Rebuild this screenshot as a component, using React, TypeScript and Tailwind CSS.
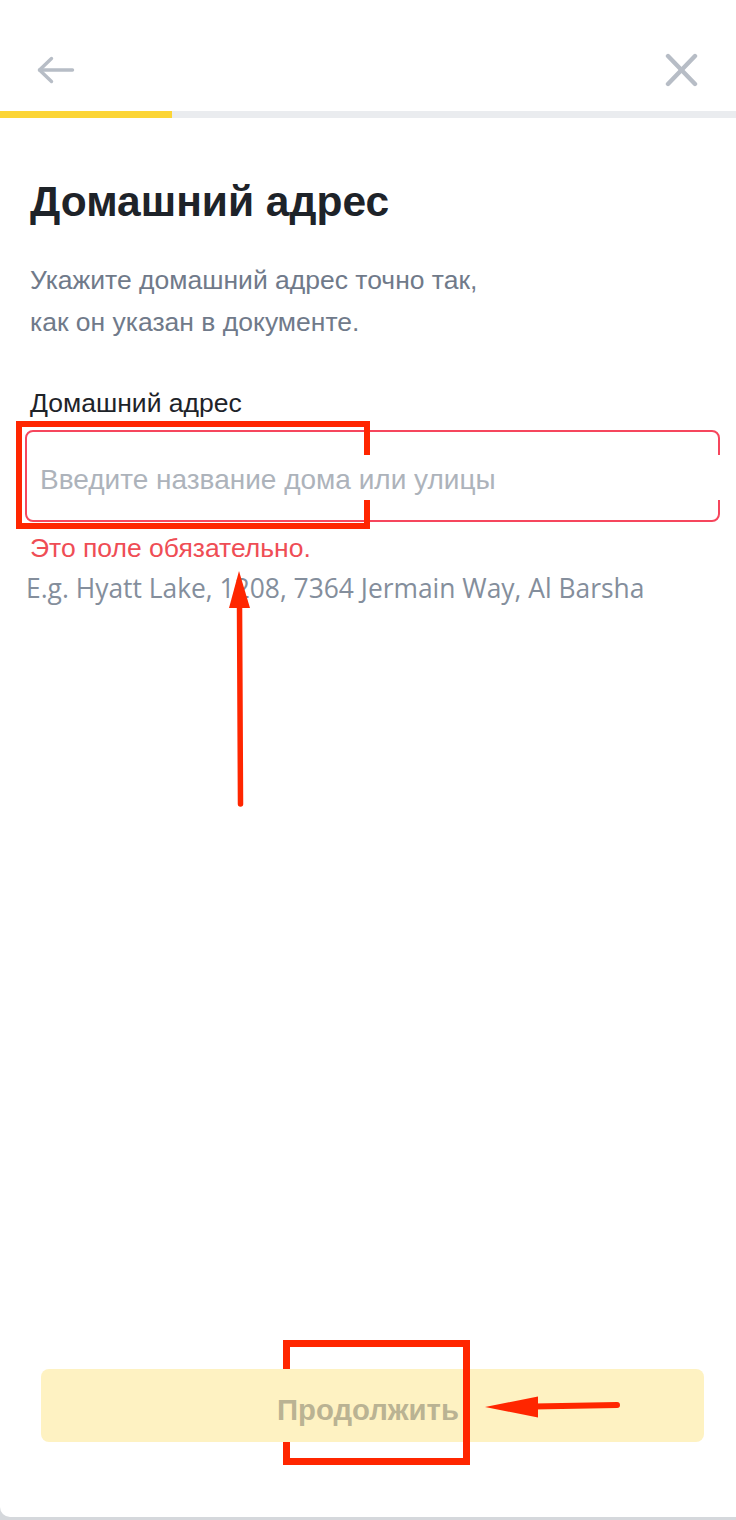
import React from "react";

const sans = "font-['Liberation_Sans','Noto_Sans',Arial,sans-serif]";

function BackIcon() {
  return (
    <svg width="40" height="30" viewBox="0 0 40 30" fill="none" stroke="#b7bdc6" strokeWidth="3.4" strokeLinecap="round" strokeLinejoin="round">
      <path d="M15.5 3.5 L3.5 15 L15.5 26.5" />
      <path d="M3.5 15 H36.5" />
    </svg>
  );
}

function CloseIcon() {
  return (
    <svg width="36" height="36" viewBox="0 0 36 36" fill="none" stroke="#b7bdc6" strokeWidth="4.4" strokeLinecap="round">
      <path d="M6 4 L33 32" />
      <path d="M33 4 L6 32" />
    </svg>
  );
}

// red markup drawn on top of the form
function Markup() {
  const red = "absolute bg-[#ff2600]";
  return (
    <div className="pointer-events-none absolute inset-0">
      {/* frame around the address field */}
      <div className={`${red} left-[16px] top-[421px] w-[354px] h-[6px]`} />
      <div className={`${red} left-[16px] top-[421px] w-[6px] h-[108px]`} />
      <div className={`${red} left-[16px] top-[523px] w-[354px] h-[6px]`} />
      <div className={`${red} left-[364px] top-[421px] w-[6px] h-[34px]`} />
      <div className={`${red} left-[364px] top-[500px] w-[6px] h-[29px]`} />

      {/* frame around the button caption */}
      <div className={`${red} left-[283px] top-[1340px] w-[187px] h-[7px]`} />
      <div className={`${red} left-[283px] top-[1458px] w-[187px] h-[7px]`} />
      <div className={`${red} left-[283px] top-[1340px] w-[7px] h-[29px]`} />
      <div className={`${red} left-[283px] top-[1442px] w-[7px] h-[23px]`} />
      <div className={`${red} left-[463px] top-[1340px] w-[7px] h-[125px]`} />

      {/* arrows */}
      <svg className="absolute left-0 top-0" width="736" height="1520" viewBox="0 0 736 1520">
        <line x1="240.5" y1="804" x2="239.5" y2="604" stroke="#ff2600" strokeWidth="5.5" strokeLinecap="round" />
        <polygon points="239,571 229,608 250,608" fill="#ff2600" />
        <line x1="617" y1="1405" x2="534" y2="1406.5" stroke="#ff2600" strokeWidth="6" strokeLinecap="round" />
        <polygon points="485,1407 538,1396.5 538,1417.5" fill="#ff2600" />
      </svg>
    </div>
  );
}

export default function App() {
  return (
    <div className="w-[736px] h-[1520px] bg-[#d5d8dc]">
      <div className={`relative flex flex-col w-[736px] h-[1517px] bg-white rounded-bl-[10px] overflow-hidden ${sans}`}>
        <header className="flex items-center justify-between h-[111px] pt-[29px] pl-[36px] pr-[38px]">
          <BackIcon />
          <CloseIcon />
        </header>

        <div className="h-[7px] bg-[#eaecef]">
          <div className="h-full w-[172px] bg-[#fcd535]" />
        </div>

        <main className="flex flex-col px-[30px]">
          <h1 className="mt-[59px] text-[42.5px] leading-[50px] font-bold text-[#1e2329]">Домашний адрес</h1>
          <p className="mt-[32px] text-[26.5px] leading-[42px] text-[#707a8a]">
            Укажите домашний адрес точно так,
            <br />
            как он указан в документе.
          </p>

          <label className="mt-[44px] text-[26.5px] leading-[32px] text-[#1e2329]">Домашний адрес</label>
          <div className="relative mt-[11px] -ml-[5px] w-[695px] h-[92px] rounded-[8px] border-2 border-[#f6465d] flex items-center pl-[13px] pt-[8px]">
            <span className="text-[28px] leading-[34px] text-[#adb3bb]">Введите название дома или улицы</span>
            <div className="absolute -right-[2px] top-[23px] w-[3px] h-[45px] bg-white" />
          </div>

          <p className="mt-[10px] text-[26.5px] leading-[32px] text-[#ef4d55]">Это поле обязательно.</p>
          <p className="mt-[7px] -ml-[4px] text-[26.4px] leading-[34px] text-[#848e9c] font-['Open_Sans',sans-serif]">
            E.g. Hyatt Lake, 1208, 7364 Jermain Way, Al Barsha
          </p>
        </main>

        <div className="flex-1" />

        <button className="mb-[75px] ml-[41px] w-[663px] h-[73px] rounded-[8px] bg-[#fef2c2] flex items-center justify-center">
          <span className="text-[29.3px] font-bold text-[#bab393] pr-[9px] pt-[8px]">Продолжить</span>
        </button>

        <Markup />
      </div>
    </div>
  );
}
